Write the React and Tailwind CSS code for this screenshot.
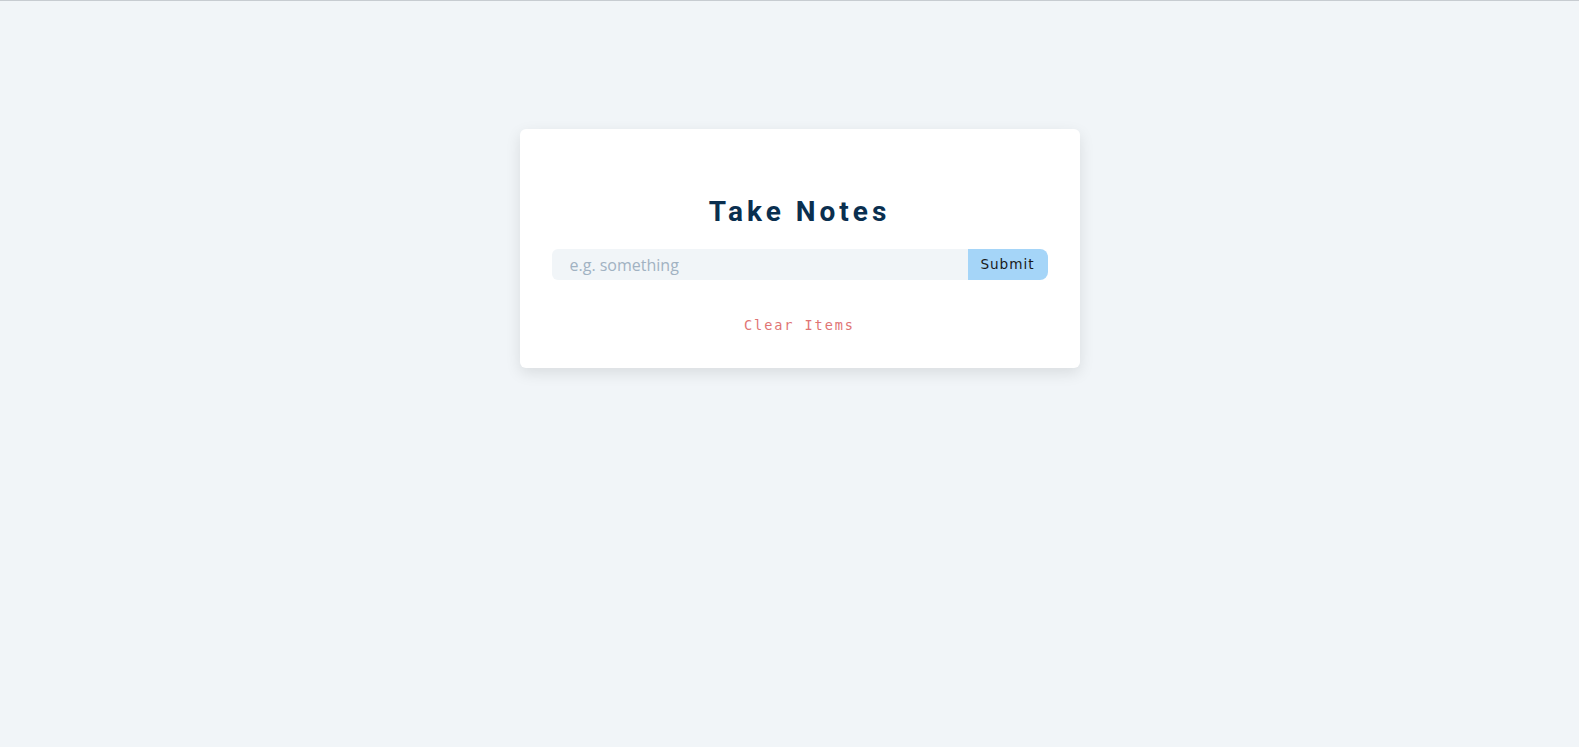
import {useState} from 'react';

export default function App() {
    const [value, setValue] = useState('');

    return (
        <div className="min-h-[747px] bg-[#f1f5f8] border-t border-[#c7ccd1]">
            <div className="pl-[20px] pt-[128px]">
                {/* Card */}
                <section className="mx-auto w-[560px] bg-white rounded-md shadow-[0_5px_15px_rgba(0,0,0,0.1)] px-8 pt-8 pb-[33px]">
                    <form onSubmit={(e) => e.preventDefault()}>
                        <h3 className="mt-[33px] mb-[20px] text-center text-[28px] leading-[35px] font-bold tracking-[0.25rem] text-[#0a2f4f] font-['Roboto',sans-serif]">
                            Take Notes
                        </h3>
                        <div className="flex h-[31px]">
                            <input
                                type="text"
                                value={value}
                                onChange={(e) => setValue(e.target.value)}
                                placeholder="e.g. something"
                                className="flex-1 min-w-0 bg-[#f1f5f8] rounded-l-md pl-[18px] pr-1 text-base text-[#617d98] placeholder:text-[#a1b2c2] outline-none font-['Open_Sans',sans-serif]"
                            />
                            <button
                                type="submit"
                                className="w-20 shrink-0 bg-[#a5d5f8] rounded-r-lg text-[13.6px] tracking-[1px] text-[#1a1a1a] font-['DejaVu_Sans',sans-serif]"
                            >
                                Submit
                            </button>
                        </div>
                    </form>
                    <button
                        type="button"
                        className="block mx-auto mt-[35px] h-5 leading-5 text-[13.6px] tracking-[1.9px] text-[#df7474] font-['DejaVu_Sans_Mono',monospace]"
                    >
                        Clear Items
                    </button>
                </section>
            </div>
        </div>
    );
}
